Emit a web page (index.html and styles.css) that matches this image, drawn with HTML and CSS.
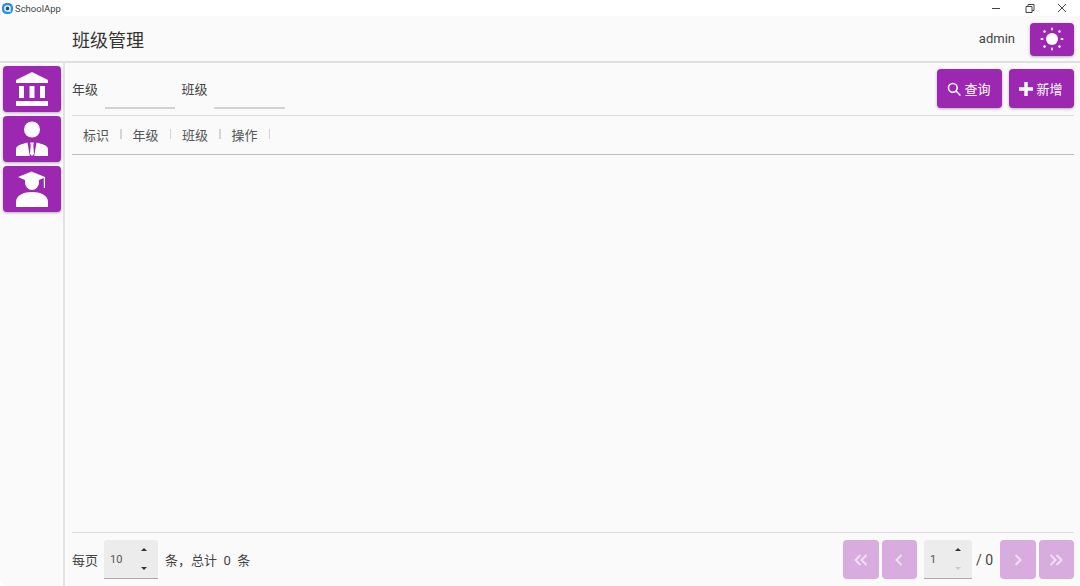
FILE: index.html
```html
<!DOCTYPE html>
<html lang="zh">
<head>
    <meta charset="UTF-8">
    <title>SchoolApp</title>
    <link rel="stylesheet" href="styles.css">
</head>
<body>
    <div class="titlebar">
        <svg class="app-logo" viewBox="0 0 12 12"><rect x="0" y="0" width="12" height="12" rx="5" fill="#2b8fe8"/><circle cx="6" cy="6" r="2.800" fill="#16508f" stroke="#fff" stroke-width="1.500"/><path d="M7.500 8 L9.400 9.600" stroke="#fff" stroke-width="1.400"/></svg>
        <span class="app-name">SchoolApp</span>
        <div class="win-btns">
            <svg viewBox="0 0 12 12"><path d="M1 6.500 H9" stroke="#444" fill="none"/></svg>
            <svg viewBox="0 0 12 12"><path d="M2 4.500 H8 V10.500 H2 Z M4 4.500 V2.500 H10 V8.500 H8" stroke="#444" fill="none"/></svg>
            <svg viewBox="0 0 12 12"><path d="M2 2 L10 10 M10 2 L2 10" stroke="#444" fill="none"/></svg>
        </div>
    </div>

    <header class="topbar">
        <h1>班级管理</h1>
        <span class="user">admin</span>
        <button class="btn theme-btn">
            <svg viewBox="0 0 24 24" width="24" height="24" fill="#fff">
                <circle cx="12" cy="12" r="6"/>
                <rect x="11" y="0.500" width="2" height="3" rx="1"/>
                <rect x="11" y="20.500" width="2" height="3" rx="1"/>
                <rect x="0.500" y="11" width="3" height="2" rx="1"/>
                <rect x="20.500" y="11" width="3" height="2" rx="1"/>
                <circle cx="4.500" cy="4.500" r="1.200"/>
                <circle cx="19.500" cy="4.500" r="1.200"/>
                <circle cx="4.500" cy="19.500" r="1.200"/>
                <circle cx="19.500" cy="19.500" r="1.200"/>
            </svg>
        </button>
    </header>

    <div class="main">
        <nav class="sidebar">
            <button class="btn side-btn">
                <svg viewBox="0 0 32 36" width="32" height="36" fill="#fff"><path d="M16 1 L32 9 V12 H0 V9 Z"/><rect x="3" y="15" width="5" height="12"/><rect x="13.500" y="15" width="5" height="12"/><rect x="24" y="15" width="5" height="12"/><rect x="0" y="30" width="32" height="5"/></svg>
            </button>
            <button class="btn side-btn">
                <svg viewBox="0 0 32 36" width="32" height="36" fill="#fff"><circle cx="16" cy="8.500" r="8"/><path d="M0 35 V28 C0 24.500 6 23 11.500 21.500 L13.800 35 Z M32 35 V28 C32 24.500 26 23 20.500 21.500 L18.200 35 Z M14 21.500 H18 L17.300 24.500 L18 33 L16 35 L14 33 L14.700 24.500 Z"/></svg>
            </button>
            <button class="btn side-btn">
                <svg viewBox="0 0 32 36" width="32" height="36" fill="#fff"><path d="M15.500 0.500 L29 6 V17 H27.800 V7 L23 9 V11.500 A7 7.500 0 0 1 9 11.500 V9 L2 6 Z"/><path d="M0 36 V31 C0 24 8 21 16 21 C24 21 32 24 32 31 V36 Z"/></svg>
            </button>
        </nav>

        <section class="content">
            <div class="filters">
                <label class="field-label">年级</label>
                <div class="field"></div>
                <label class="field-label">班级</label>
                <div class="field"></div>
                <div class="actions">
                    <button class="btn action-btn">
                        <svg viewBox="0 0 24 24" width="14" height="14" fill="none" stroke="#fff" stroke-width="2.600"><circle cx="10" cy="10" r="7.500"/><path d="M15.500 15.500 L23 23"/></svg>
                        查询
                    </button>
                    <button class="btn action-btn">
                        <svg viewBox="0 0 14 14" width="14" height="14" fill="#fff"><path d="M5.300 0 H8.700 V5.300 H14 V8.700 H8.700 V14 H5.300 V8.700 H0 V5.300 H5.300 Z"/></svg>
                        新增
                    </button>
                </div>
            </div>

            <div class="table-head">
                <span class="col">标识</span>
                <span class="col">年级</span>
                <span class="col">班级</span>
                <span class="col">操作</span>
            </div>
            <div class="table-body"></div>

            <footer class="pager">
                <span>每页</span>
                <div class="spin spin-size">
                    <span class="spin-val">10</span>
                    <span class="arrows"><i class="up"></i><i class="down"></i></span>
                </div>
                <span class="summary">条，总计&nbsp; 0 &nbsp;条</span>
                <div class="pager-right">
                    <button class="btn page-btn"><svg viewBox="0 0 14 12" width="14" height="12"><path d="M6.500 1 L1.500 6 L6.500 11 M12.500 1 L7.500 6 L12.500 11"/></svg></button>
                    <button class="btn page-btn"><svg viewBox="0 0 14 12" width="14" height="12"><path d="M9.500 1 L4.500 6 L9.500 11"/></svg></button>
                    <div class="spin spin-page">
                        <span class="spin-val">1</span>
                        <span class="arrows"><i class="up"></i><i class="down off"></i></span>
                    </div>
                    <span class="total">/ 0</span>
                    <button class="btn page-btn"><svg viewBox="0 0 14 12" width="14" height="12"><path d="M4.500 1 L9.500 6 L4.500 11"/></svg></button>
                    <button class="btn page-btn"><svg viewBox="0 0 14 12" width="14" height="12"><path d="M1.500 1 L6.500 6 L1.500 11 M7.500 1 L12.500 6 L7.500 11"/></svg></button>
                </div>
            </footer>
        </section>
    </div>
</body>
</html>
```

FILE: styles.css
```css
* {
    box-sizing: border-box;
}

html, body {
    height: 100%;
}

html {
    background: #fff;
}

body {
    margin: 0;
    display: flex;
    flex-direction: column;
    overflow: hidden;
    border-radius: 0 0 7px 7px;
    background: #fafafa;
    color: #444;
    font-family: Roboto, "Noto Sans CJK SC", sans-serif;
    font-size: 13px;
}

.btn {
    display: flex;
    align-items: center;
    justify-content: center;
    border: none;
    border-radius: 4px;
    padding: 0;
    background: #9c27b0;
    color: #fff;
    font-family: inherit;
    box-shadow: 0 1px 3px rgba(0, 0, 0, 0.3);
}

.titlebar {
    height: 16px;
    display: flex;
    align-items: center;
    background: #fff;
}

.app-logo {
    width: 11px;
    height: 11px;
    margin-left: 2px;
}

.app-name {
    margin-left: 2px;
    font-size: 9.500px;
    color: #444;
}

.win-btns {
    margin-left: auto;
    display: flex;
    gap: 20.500px;
    padding-right: 12px;
}

.win-btns svg {
    width: 12px;
    height: 12px;
    margin-top: -1px;
}

.topbar {
    height: 47px;
    display: flex;
    align-items: center;
    padding: 0 6px 0 72px;
    border-bottom: 2px solid #e0e0e0;
}

.topbar h1 {
    margin: 1px 0 0;
    font-size: 18px;
    font-weight: 400;
    color: #333;
}

.user {
    margin-left: auto;
    margin-right: 15px;
    color: #444;
}

.theme-btn {
    width: 44px;
    height: 33px;
    margin-top: 1px;
}

.main {
    flex: 1;
    display: flex;
    min-height: 0;
}

.sidebar {
    width: 65px;
    padding: 3px 3px 0 3px;
    border-right: 2px solid #e2e2e2;
    display: flex;
    flex-direction: column;
    gap: 4px;
}

.side-btn {
    width: 58px;
    height: 46px;
}

.content {
    flex: 1;
    display: flex;
    flex-direction: column;
    padding: 0 6px 0 7px;
}

.filters {
    height: 53px;
    display: flex;
    align-items: center;
    border-bottom: 1px solid #ddd;
}

.field-label {
    width: 32px;
    margin-top: -2px;
}

.field {
    width: 70.500px;
    height: 34px;
    margin: 6px 6.500px 0 0.500px;
    border-bottom: 2px solid #d2d2d2;
}

.actions {
    margin-left: auto;
    display: flex;
    gap: 7px;
    margin-top: -1px;
}

.action-btn {
    width: 65px;
    height: 39px;
    gap: 3px;
    padding-right: 1px;
    font-size: 13px;
}

.table-head {
    height: 39px;
    display: flex;
    align-items: center;
    border-bottom: 1px solid #bbb;
    padding: 0 0 2px 11px;
    flex-shrink: 0;
}

.col {
    width: 49.500px;
    color: #555;
    position: relative;
}

.col::after {
    content: "";
    position: absolute;
    right: 11px;
    top: 50%;
    margin-top: -5px;
    width: 1.500px;
    height: 10px;
    background: #d5d5d5;
}

.table-body {
    flex: 1;
    border-bottom: 1px solid #ddd;
}

.pager {
    height: 53px;
    display: flex;
    align-items: center;
}

.spin {
    height: 39px;
    display: flex;
    align-items: center;
    justify-content: space-between;
    background: #ececec;
    border-bottom: 1px solid #aaa;
    border-radius: 3px 3px 0 0;
    padding: 0 11px 0 6px;
}

.spin-size {
    width: 54px;
    margin: 0 7px 0 6px;
}

.spin-page {
    width: 48px;
    margin-left: 4px;
}

.spin-val {
    font-size: 11px;
    color: #555;
}

.arrows {
    height: 100%;
    display: flex;
    flex-direction: column;
    justify-content: space-between;
    padding: 8px 0;
}

.arrows i {
    width: 0;
    height: 0;
    border-left: 3px solid transparent;
    border-right: 3px solid transparent;
}

.arrows .up {
    border-bottom: 3px solid #333;
}

.arrows .down {
    border-top: 3px solid #333;
}

.arrows .off {
    border-top-color: #ccc;
}

.summary {
    color: #444;
}

.pager-right {
    margin-left: auto;
    display: flex;
    align-items: center;
    gap: 3px;
}

.page-btn {
    width: 35.500px;
    height: 39px;
    background: #d8acdf;
    box-shadow: none;
}

.page-btn svg {
    fill: none;
    stroke: #f0dff3;
    stroke-width: 2;
}

.total {
    width: 21px;
    margin-left: 1px;
    font-size: 14px;
    color: #444;
}
```
